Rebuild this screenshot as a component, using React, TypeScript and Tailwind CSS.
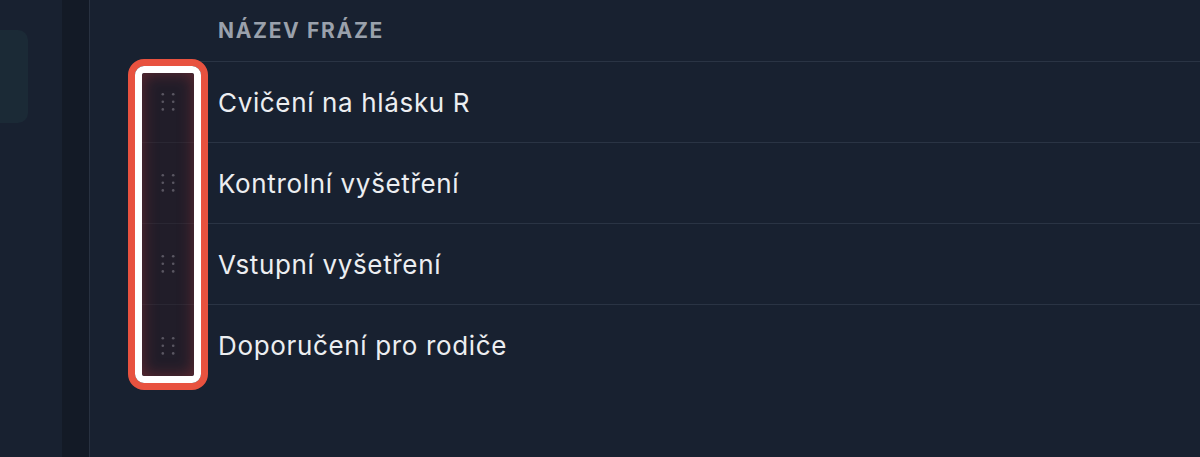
import React from "react";

const rows = [
  "Cvičení na hlásku R",
  "Kontrolní vyšetření",
  "Vstupní vyšetření",
  "Doporučení pro rodiče",
];

function Grip() {
  return (
    <svg width="14" height="20" viewBox="0 0 14 20" aria-hidden="true">
      {[2.2, 9.8, 17.4].map((y) =>
        [1.8, 12.2].map((x) => (
          <circle key={`${x}-${y}`} cx={x} cy={y} r="1.3" fill="#8a93a2" />
        ))
      )}
    </svg>
  );
}

export default function App() {
  return (
    <div
      className="w-[1200px] h-[457px] flex bg-[#182130] overflow-hidden"
      style={{ fontFamily: "Inter, 'Noto Sans', sans-serif" }}
    >
      <aside className="w-[62px] shrink-0 flex flex-col pt-[30px]">
        <div className="w-[28px] h-[93px] rounded-r-[10px] bg-[#1b2a36]" />
      </aside>
      <div className="w-[27px] shrink-0 bg-[#131a26]" />
      <div className="w-px shrink-0 bg-[#283140]" />
      <main className="flex-1 pl-[50px]">
        <div className="relative">
          <div className="h-[62px] flex items-center border-b border-[#2a3444]">
            <div className="w-[56px] shrink-0" />
            <div className="pl-[22px] text-[21px] font-bold tracking-[0.08em] text-[#9aa1ac] uppercase">
              Název fráze
            </div>
          </div>
          {rows.map((r, i) => (
            <div
              key={r}
              className={`h-[81px] flex items-center ${
                i < rows.length - 1 ? "border-b border-[#2a3444]" : ""
              }`}
            >
              <div className="w-[56px] shrink-0 flex justify-center">
                <Grip />
              </div>
              <div className="pl-[22px] text-[26px] font-normal tracking-[0.025em] text-[#eceef1]">
                {r}
              </div>
            </div>
          ))}
          <div className="pointer-events-none absolute left-[-12px] top-[59px] w-[80px] h-[331px] rounded-[16px] border-[7px] border-[#e8523f]">
            <div className="h-full rounded-[9px] border-[7px] border-white">
              <div className="h-full rounded-[3px] bg-[#2a1a22]/50 shadow-[inset_0_0_16px_rgba(200,60,60,0.4)]" />
            </div>
          </div>
        </div>
      </main>
    </div>
  );
}
